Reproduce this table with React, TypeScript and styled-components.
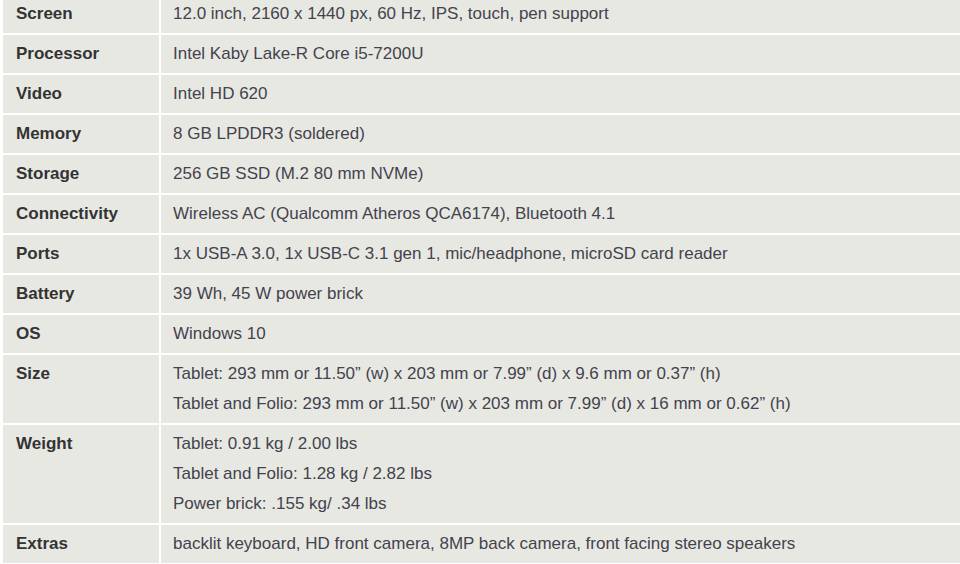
import styled, { createGlobalStyle } from 'styled-components'

const GlobalStyle = createGlobalStyle`
    html, body {
        margin: 0;
        padding: 0;
        background: #ffffff;
        overflow: hidden;
    }
    body {
        font-family: "Liberation Sans", Arial, sans-serif;
        font-size: 17px;
    }
`

const specs: { label: string; lines: string[] }[] = [
    { label: 'Screen', lines: ['12.0 inch, 2160 x 1440 px, 60 Hz, IPS, touch, pen support'] },
    { label: 'Processor', lines: ['Intel Kaby Lake-R Core i5-7200U'] },
    { label: 'Video', lines: ['Intel HD 620'] },
    { label: 'Memory', lines: ['8 GB LPDDR3 (soldered)'] },
    { label: 'Storage', lines: ['256 GB SSD (M.2 80 mm NVMe)'] },
    { label: 'Connectivity', lines: ['Wireless AC (Qualcomm Atheros QCA6174), Bluetooth 4.1'] },
    { label: 'Ports', lines: ['1x USB-A 3.0, 1x USB-C 3.1 gen 1, mic/headphone, microSD card reader'] },
    { label: 'Battery', lines: ['39 Wh, 45 W power brick'] },
    { label: 'OS', lines: ['Windows 10'] },
    {
        label: 'Size',
        lines: [
            'Tablet: 293 mm or 11.50\u201d (w) x 203 mm or 7.99\u201d (d) x 9.6 mm or 0.37\u201d (h)',
            'Tablet and Folio: 293 mm or 11.50\u201d (w) x 203 mm or 7.99\u201d (d) x 16 mm or 0.62\u201d (h)',
        ],
    },
    {
        label: 'Weight',
        lines: [
            'Tablet: 0.91 kg / 2.00 lbs',
            'Tablet and Folio: 1.28 kg / 2.82 lbs',
            'Power brick: .155 kg/ .34 lbs',
        ],
    },
    { label: 'Extras', lines: ['backlit keyboard, HD front camera, 8MP back camera, front facing stereo speakers'] },
]

export default function App() {
    return (
        <>
            <GlobalStyle />
            <Page>
                <SpecTable>
                    <tbody>
                        {specs.map((row) => (
                            <tr key={row.label}>
                                <Label>{row.label}</Label>
                                <Value>
                                    {row.lines.map((line) => (
                                        <Line key={line}>{line}</Line>
                                    ))}
                                </Value>
                            </tr>
                        ))}
                    </tbody>
                </SpecTable>
            </Page>
        </>
    )
}

const Page = styled.div`
    width: 960px;
    height: 564px;
    overflow: hidden;
    padding-left: 1px;
    box-sizing: border-box;
`

const SpecTable = styled.table`
    width: 1010px;
    margin-top: -7px;
    border-collapse: separate;
    border-spacing: 2px;
    table-layout: fixed;
`

const Cell = styled.td`
    background-color: #e8e8e3;
    padding: 4px 12px;
    vertical-align: top;
    line-height: 30px;
`

const Label = styled(Cell)`
    width: 131px;
    padding-left: 13px;
    font-weight: bold;
    color: #333333;
`

const Value = styled(Cell)`
    color: #43434d;
`

const Line = styled.div``
